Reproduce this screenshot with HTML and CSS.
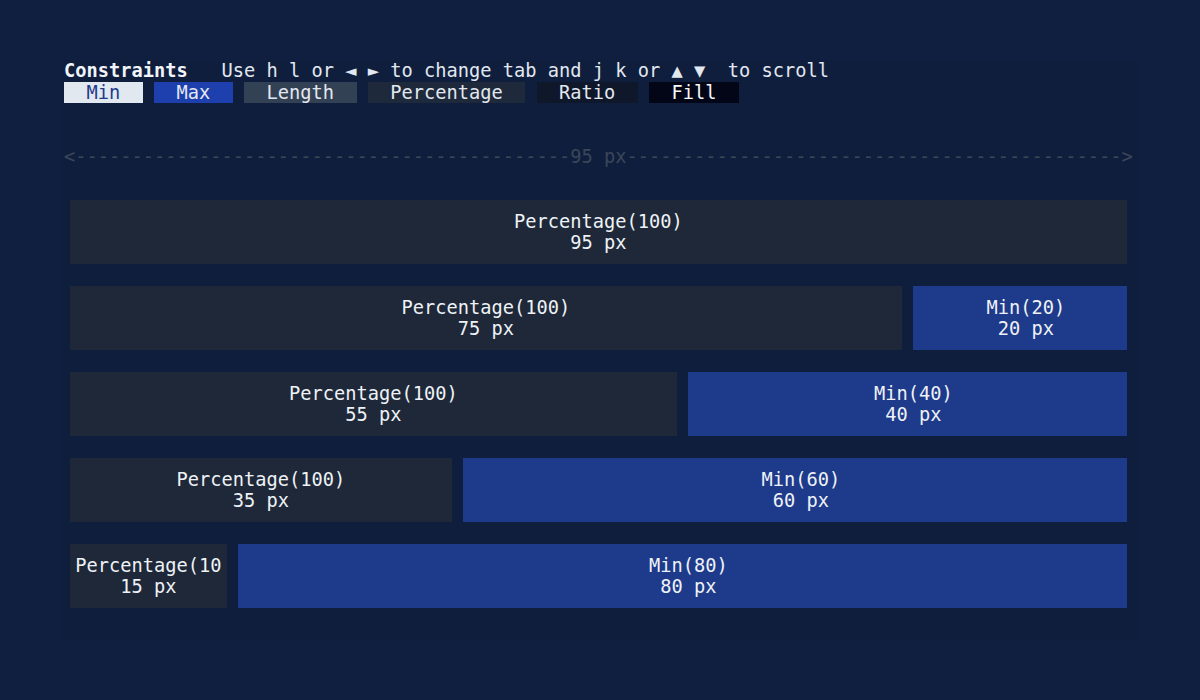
FILE: index.html
```html
<!DOCTYPE html>
<html>
<head>
<meta charset="utf-8">
<link rel="stylesheet" href="styles.css">
</head>
<body>
<div class="term">
  <div class="line"><b class="title">Constraints</b>   Use h l or ◄ ► to change tab and j k or ▲ ▼  to scroll</div>
  <div class="line tabs">
    <span class="tab t-min">Min</span>
    <span class="tab t-max">Max</span>
    <span class="tab t-len">Length</span>
    <span class="tab t-pct">Percentage</span>
    <span class="tab t-ratio">Ratio</span>
    <span class="tab t-fill">Fill</span>
  </div>
  <div class="blank2"></div>
  <div class="line dash">&lt;--------------------------------------------95 px--------------------------------------------&gt;</div>
  <div class="blank1"></div>

  <div class="row">
    <div class="block pct" style="width:95ch"><div class="box"><span class="txt">Percentage(100)</span><span class="txt">95 px</span></div></div>
  </div>
  <div class="row">
    <div class="block pct" style="width:75ch"><div class="box"><span class="txt">Percentage(100)</span><span class="txt">75 px</span></div></div>
    <div class="block min" style="width:20ch"><div class="box"><span class="txt">Min(20)</span><span class="txt">20 px</span></div></div>
  </div>
  <div class="row">
    <div class="block pct" style="width:55ch"><div class="box"><span class="txt">Percentage(100)</span><span class="txt">55 px</span></div></div>
    <div class="block min" style="width:40ch"><div class="box"><span class="txt">Min(40)</span><span class="txt">40 px</span></div></div>
  </div>
  <div class="row">
    <div class="block pct" style="width:35ch"><div class="box"><span class="txt">Percentage(100)</span><span class="txt">35 px</span></div></div>
    <div class="block min" style="width:60ch"><div class="box"><span class="txt">Min(60)</span><span class="txt">60 px</span></div></div>
  </div>
  <div class="row">
    <div class="block pct" style="width:15ch"><div class="box"><span class="txt">Percentage(10</span><span class="txt">15 px</span></div></div>
    <div class="block min" style="width:80ch"><div class="box"><span class="txt">Min(80)</span><span class="txt">80 px</span></div></div>
  </div>
</div>
</body>
</html>
```

FILE: styles.css
```css
html, body {
  margin: 0;
  background: #101f3f;
}

.term {
  margin: 60px 0 0 60px;
  width: 1072px;
  height: 580px;
  padding: 0 4px;
  background: #0f1e3d;
  font-family: "DejaVu Sans Mono", monospace;
  font-size: 18.7px;
  line-height: 21.5px;
  color: #e2e8f0;
}

.line {
  white-space: pre;
  height: 21.5px;
}

.title {
  font-weight: bold;
  color: #f1f5f9;
}

.tabs {
  display: flex;
  gap: 1ch;
}

.tab {
  padding: 0 2ch;
}

.t-min { background: #e2e8f0; color: #1e3a8a; }
.t-max { background: #1e40af; color: #e2e8f0; }
.t-len { background: #334155; color: #e2e8f0; }
.t-pct { background: #1e293b; color: #e2e8f0; }
.t-ratio { background: #0f172a; color: #e2e8f0; }
.t-fill { background: #020617; color: #f8fafc; }

.blank2 { height: 43px; }
.blank1 { height: 21.5px; }

.dash {
  color: #3b4658;
}

.row {
  display: flex;
  height: 86px;
}

.block {
  box-sizing: border-box;
  padding: 10.75px 0.5ch;
  flex: none;
}

.box {
  box-sizing: border-box;
  height: 64.5px;
  padding: 10.75px 0.5ch;
  display: flex;
  flex-direction: column;
  align-items: center;
  overflow: hidden;
}

.pct .box { background: #1e2838; }
.min .box {
  background: #1e3a8a;
  padding-left: 1.5ch;
  padding-right: 0.5ch;
}

.txt {
  white-space: pre;
  color: #eef2f7;
}
```
